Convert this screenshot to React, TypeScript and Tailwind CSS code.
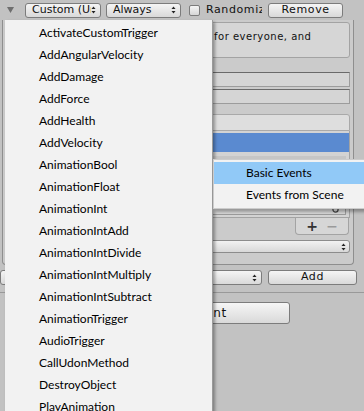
import React from "react";

const items = [
  "ActivateCustomTrigger",
  "AddAngularVelocity",
  "AddDamage",
  "AddForce",
  "AddHealth",
  "AddVelocity",
  "AnimationBool",
  "AnimationFloat",
  "AnimationInt",
  "AnimationIntAdd",
  "AnimationIntDivide",
  "AnimationIntMultiply",
  "AnimationIntSubtract",
  "AnimationTrigger",
  "AudioTrigger",
  "CallUdonMethod",
  "DestroyObject",
  "PlayAnimation",
];

function Arrows() {
  return (
    <svg width="5" height="8" viewBox="0 0 5 8" className="shrink-0">
      <path d="M2.5 0.5 L4.5 3 L0.5 3 Z" fill="#222" />
      <path d="M2.5 7.5 L4.5 5 L0.5 5 Z" fill="#222" />
    </svg>
  );
}

function Popup({ label, className }: { label: string; className: string }) {
  return (
    <div className={`h-[15px] flex items-center rounded-[3px] border border-[#7c7c7c] bg-gradient-to-b from-[#f5f5f5] to-[#d9d9d9] pl-[6px] pr-[4px] overflow-hidden ${className}`}>
      <span className="flex-1 whitespace-nowrap overflow-hidden">{label}</span>
      <Arrows />
    </div>
  );
}

function Button({ label, className }: { label: string; className: string }) {
  return (
    <div className={`h-[15px] flex items-center justify-center rounded-[3px] border border-[#7c7c7c] bg-gradient-to-b from-[#f5f5f5] to-[#d9d9d9] tracking-[0.6px] ${className}`}>
      {label}
    </div>
  );
}

export default function App() {
  return (
    <div className="relative w-[364px] h-[411px] overflow-hidden bg-[#c2c2c2] font-['DejaVu_Sans',sans-serif] text-[11px] text-[#111]">
      {/* Component header */}
      <div className="h-[20px] flex items-center pl-[7px]">
        <svg width="7" height="6" viewBox="0 0 7 6">
          <path d="M0 0 L7 0 L3.5 6 Z" fill="#6e6e6e" />
        </svg>
        <Popup label="Custom (Ur" className="ml-[11px] w-[76px]" />
        <Popup label="Always" className="ml-[5px] w-[75px]" />
        <div className="ml-[8px] w-[11px] h-[11px] rounded-[2px] border border-[#7c7c7c] bg-gradient-to-b from-[#f5f5f5] to-[#d6d6d6]" />
        <span className="ml-[6px] w-[56px] overflow-hidden whitespace-nowrap tracking-[0.6px]">Randomize</span>
        <Button label="Remove" className="ml-[6px] w-[75px]" />
      </div>

      {/* Trigger panel */}
      <div className="ml-[2px] w-[352px] h-[245px] border border-t-0 border-[#8e8e8e] rounded-b-[4px] bg-[#cbcbcb] px-[3px] pt-[2px] flex flex-col">
        <div className="h-[36px] rounded-[3px] border border-[#a3a3a3] bg-[#d6d6d6] text-[10px] tracking-[0.5px] pt-[6px] pl-[207px] whitespace-nowrap overflow-hidden">
          for everyone, and
        </div>
        <div className="mt-[14px] h-[15px] border border-[#9c9c9c] border-t-[#6a6a6a] bg-[#d5d5d5]" />
        <div className="mt-[2px] h-[15px] border border-[#9c9c9c] border-t-[#6a6a6a] bg-[#d5d5d5]" />

        {/* list */}
        <div className="mt-[10px] h-[17px] rounded-t-[3px] border border-[#a9a9a9] bg-[#dedede]" />
        <div className="h-[87px] border border-t-0 border-[#a3a3a3] bg-[#d3d3d3] flex flex-col pt-[2px]">
          <div className="h-[19px] bg-[#5a8ad0]" />
          <div className="mt-[4px] mx-[3px] h-[4px] bg-[#c6c6c6]" />
          <div className="mt-auto mb-[2px] mx-[3px] h-[16px] flex border border-[#9c9c9c] bg-[#d9d9d9]">
            <div className="flex-1" />
            <div className="w-[20px] flex items-end justify-center pb-[1px]">
              <svg width="7" height="7" viewBox="0 0 7 7">
                <circle cx="3.5" cy="3.5" r="2.6" fill="none" stroke="#444" strokeWidth="1.2" />
              </svg>
            </div>
          </div>
        </div>
        <div className="flex justify-end">
          <div className="w-[54px] h-[17px] mr-[1px] border border-t-0 border-[#a3a3a3] rounded-b-[4px] bg-[#d6d6d6] flex items-center justify-around px-[6px] text-[14px] font-bold">
            <span className="text-[#333]">+</span>
            <span className="text-[#9a9a9a]">−</span>
          </div>
        </div>
        <div className="mt-[5px] h-[13px] rounded-[3px] border border-[#8c8c8c] bg-gradient-to-b from-[#f2f2f2] to-[#d8d8d8] flex items-center justify-end pr-[3px]">
          <Arrows />
        </div>
      </div>

      {/* Add event row */}
      <div className="mt-[5px] flex items-center">
        <Popup label="" className="w-[262px]" />
        <Button label="Add" className="ml-[6px] w-[89px]" />
      </div>
      <div className="mt-[7px] h-px bg-[#999]" />
      <div className="mt-[9px] flex">
        <div className="ml-[60px] w-[230px] h-[22px] rounded-[3px] border border-[#7c7c7c] bg-gradient-to-b from-[#f6f6f6] to-[#d9d9d9] flex items-center justify-center text-[12px] tracking-[0.5px]">
          Add Component
        </div>
      </div>

      {/* Action dropdown menu */}
      <div className="absolute left-[5px] top-[20px] w-[208px] h-[400px] bg-[#f2f2f2] border-r border-[#9a9a9a] shadow-[2px_2px_3px_rgba(0,0,0,0.35)] pt-[2px] font-['Lato',sans-serif] text-[12px] text-black">
        {items.map((it) => (
          <div key={it} className="h-[22px] flex items-center pl-[34px] whitespace-nowrap">
            {it}
          </div>
        ))}
      </div>

      {/* Submenu */}
      <div className="absolute left-[213px] top-[159px] w-[160px] py-[2px] bg-[#f2f2f2] border border-[#cccccc] shadow-[2px_3px_3px_rgba(0,0,0,0.3)] font-['Lato',sans-serif] text-[12px] text-black">
        <div className="h-[22px] flex items-center pl-[32px] bg-[#91c9f7]">Basic Events</div>
        <div className="h-[22px] flex items-center pl-[32px]">Events from Scene</div>
      </div>
    </div>
  );
}
